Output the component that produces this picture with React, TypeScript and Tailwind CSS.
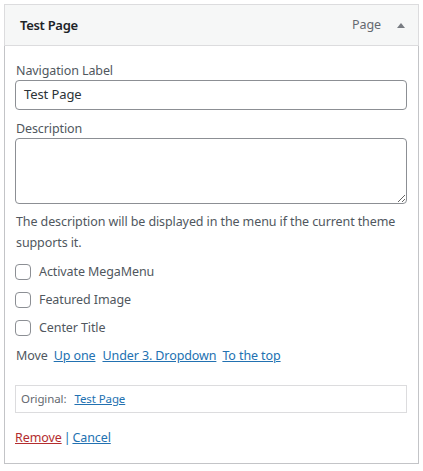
import React from "react";

const font = { fontFamily: '"Noto Sans", "Open Sans", sans-serif' };

function Check({ label }: { label: string }) {
  return (
    <label className="flex h-[28px] items-center gap-[8px]">
      <span className="block h-[16px] w-[16px] rounded-[4px] border border-[#8c8f94] bg-white" />
      <span className="text-[#50575e]">{label}</span>
    </label>
  );
}

export default function App() {
  return (
    <div className="bg-white p-[4px]" style={font}>
      <div className="w-[415px]">
        <div className="flex h-[42px] items-center border border-[#dcdcde] bg-[#f6f7f7] pl-[15px] pr-[12px] pt-[1px]">
          <span className="flex-1 text-[13px] font-semibold tracking-[-0.3px] text-[#1d2327]">Test Page</span>
          <span className="text-[12.5px] tracking-[-0.1px] text-[#646970]">Page</span>
          <svg width="8" height="5" viewBox="0 0 8 5" className="mb-[1px] ml-[16px] mr-[1px]">
            <polygon points="4,0 8,5 0,5" fill="#787c82" />
          </svg>
        </div>
        <div className="border-x border-b border-[#c3c4c7] pb-[15px] pl-[10px] pr-[11px] pt-[14px] text-[12.5px] tracking-[-0.1px] text-[#3c434a]">
          <div className="h-[20px] pl-[1px] pt-[1px] leading-[20px] text-[#50575e]">Navigation Label</div>
          <div className="flex h-[30px] items-center rounded-[4px] border border-[#8c8f94] px-[8px] text-[13px] text-[#2c3338]">
            Test Page
          </div>
          <div className="mt-[8px] h-[20px] pl-[1px] pt-[1px] leading-[20px] text-[#50575e]">Description</div>
          <textarea
            className="block h-[66px] w-full rounded-[4px] border border-[#8c8f94] bg-white outline-none"
            readOnly
          />
          <p className="mt-[7px] pl-[1px] leading-[21px] text-[#50575e]">
            The description will be displayed in the menu if the current theme supports it.
          </p>
          <div className="mt-[5px]">
            <Check label="Activate MegaMenu" />
            <Check label="Featured Image" />
            <Check label="Center Title" />
            <div className="flex h-[28px] items-center gap-[6px] pl-[1px] text-[#50575e]">
              <span>Move</span>
              <a className="text-[#2271b1] underline">Up one</a>
              <a className="ml-[1px] text-[#2271b1] underline">Under 3. Dropdown</a>
              <a className="text-[#2271b1] underline">To the top</a>
            </div>
          </div>
          <div className="mt-[15px] flex h-[28px] items-center gap-[8px] border border-[#dcdcde] px-[5px] text-[11.5px] text-[#646970]">
            <span>Original:</span>
            <a className="text-[#2271b1] underline">Test Page</a>
          </div>
          <div className="mt-[15px] flex h-[20px] items-center">
            <a className="text-[#b32d2e] underline">Remove</a>
            <span className="mx-[2px] text-[#2271b1]">|</span>
            <a className="text-[#2271b1] underline">Cancel</a>
          </div>
        </div>
      </div>
    </div>
  );
}
